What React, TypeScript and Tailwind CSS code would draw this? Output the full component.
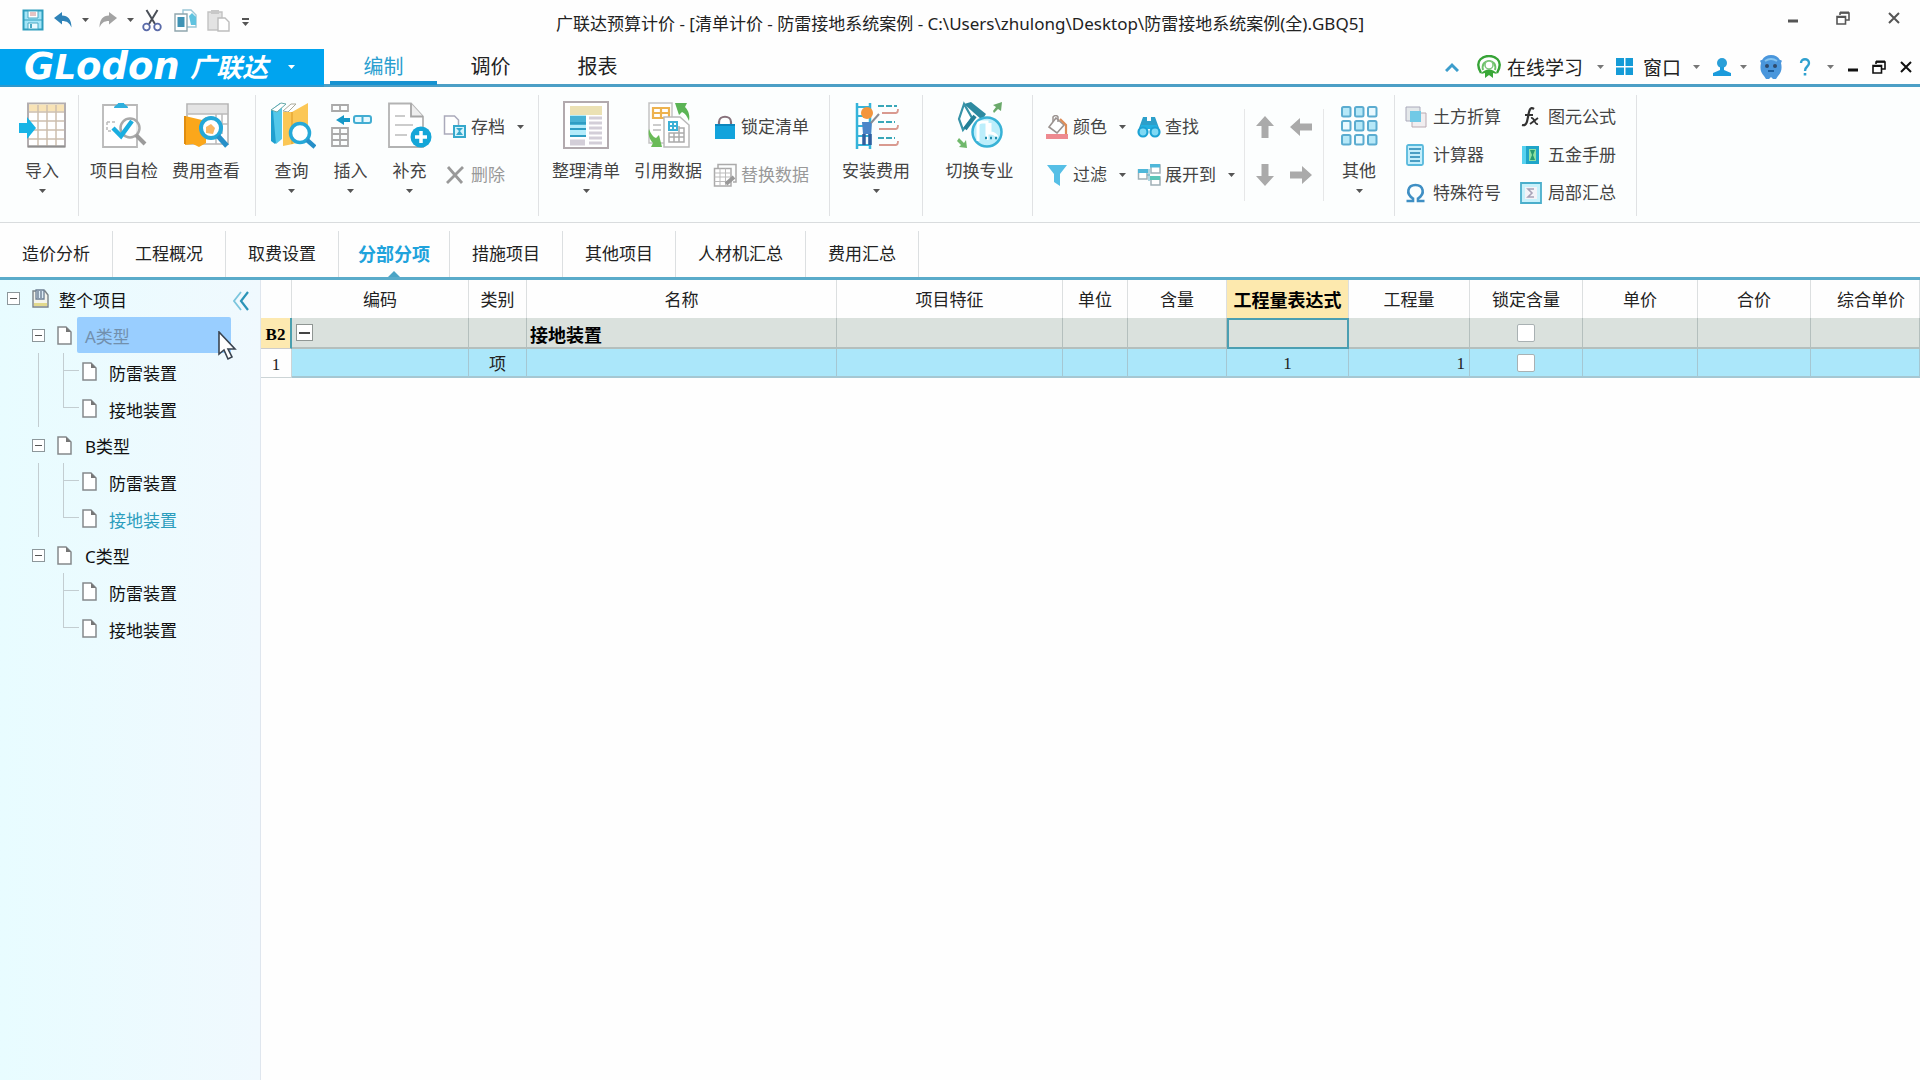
import type { ReactNode } from "react";

/* ---------- small shared pieces ---------- */

function Caret({ className = "text-[#555]" }: { className?: string }) {
  return (
    <svg viewBox="0 0 7 4" className={`h-1 w-[7px] shrink-0 ${className}`} aria-hidden="true">
      <path d="M0 0h7L3.500 4z" fill="currentColor" />
    </svg>
  );
}

function Svg({ s, vb, children }: { s: string; vb: string; children: ReactNode }) {
  return (
    <svg viewBox={vb} className={`shrink-0 ${s}`} fill="none" aria-hidden="true">
      {children}
    </svg>
  );
}

const small = "size-6";
const large = "size-12";

/* ---------- quick access icons ---------- */

const SaveIcon = () => (
  <Svg s="size-[22px]" vb="0 0 22 22">
    <path d="M1.500 1.500h19v19h-19z" stroke="#2e9dbd" strokeWidth="2" fill="#a5e6f8" />
    <path d="M6 2h10v7H6z" fill="#fff" stroke="#4aa9c4" />
    <path d="M8 4h6M8 6h6" stroke="#c88" />
    <path d="M2 11h18" stroke="#2e9dbd" />
    <path d="M6 14h10v6H6z" fill="#eafaff" stroke="#4aa9c4" />
    <path d="M9 15v4" stroke="#4aa9c4" strokeWidth="2" />
  </Svg>
);

const UndoIcon = ({ color }: { color: string }) => (
  <Svg s="h-4 w-[18px]" vb="0 0 18 16">
    <path d="M0 6 8 0v3.500c6 0 9.500 4 9.500 12C15.500 11 13 9 8 9v3.500z" fill={color} />
  </Svg>
);

const RedoIcon = ({ color }: { color: string }) => (
  <Svg s="h-4 w-[18px]" vb="0 0 18 16">
    <path d="M18 6 10 0v3.500c-6 0-9.500 4-9.500 12C2.500 11 5 9 10 9v3.500z" fill={color} />
  </Svg>
);

const CutIcon = () => (
  <Svg s="h-[23px] w-5" vb="0 0 20 23">
    <path d="M4.500 1 13 15M15.500 1 7 15" stroke="#4a4f58" strokeWidth="2" />
    <circle cx="4.500" cy="18" r="3.300" stroke="#5a6aa8" strokeWidth="1.800" />
    <circle cx="15.500" cy="18" r="3.300" stroke="#5a6aa8" strokeWidth="1.800" />
  </Svg>
);

const CopyIcon = () => (
  <Svg s="size-[23px]" vb="0 0 23 23">
    <path d="M9 1h8l5 5v12H9z" fill="#fff" stroke="#9ac6d6" strokeWidth="1.400" />
    <path d="M15 7l3-3 4 4v8h-5z" fill="#5fc3e0" />
    <path d="M1 5h12v17H1z" fill="#fff" stroke="#8fa5ad" strokeWidth="1.400" />
    <path d="M3.500 8h7v10h-7z" fill="#3f93b5" />
  </Svg>
);

const PasteIcon = () => (
  <Svg s="size-[23px]" vb="0 0 23 23">
    <path d="M1 3h14v18H1z" fill="#e3e3e3" stroke="#c2c2c2" strokeWidth="1.400" />
    <path d="M4 1h8v4H4z" fill="#c8c8c8" />
    <path d="M11 9h7l4 4v9H11z" fill="#fff" stroke="#bdbdbd" strokeWidth="1.400" />
  </Svg>
);

const RestoreIcon = ({ color }: { color: string }) => (
  <Svg s="size-[14px]" vb="0 0 14 14">
    <path d="M4 4V2h9v7h-3" stroke={color} strokeWidth="1.600" />
    <path d="M4 1.500h9" stroke={color} strokeWidth="2" />
    <path d="M1 5.500h8.500V13H1z" stroke={color} strokeWidth="1.600" />
    <path d="M1 6h8" stroke={color} strokeWidth="2" />
  </Svg>
);

const CloseIcon = ({ color }: { color: string }) => (
  <Svg s="size-3" vb="0 0 12 12">
    <path d="m1 1 10 10M11 1 1 11" stroke={color} strokeWidth="2" />
  </Svg>
);

const MinIcon = ({ color }: { color: string }) => (
  <Svg s="h-3 w-[10px]" vb="0 0 10 12">
    <path d="M0 9h10" stroke={color} strokeWidth="3" />
  </Svg>
);

/* ---------- ribbon icons, large ---------- */

const ImportIcon = () => (
  <Svg s={large} vb="0 0 48 48">
    <path d="M10 2.500h37v43H10z" fill="#fff" stroke="#b3aeb0" strokeWidth="2" />
    <path d="M11 3.500h35v7H11z" fill="#f8e3b6" />
    <path d="M11 11h35M11 20h35M11 29h35M11 38h35M20 4v41M29 4v41M38 4v41" stroke="#cdbfae" strokeWidth="1.500" />
    <path d="M10 45.500h37" stroke="#8f8f8f" strokeWidth="2" />
    <path d="M1 22h8v-6l9 11-9 11v-6H1z" fill="#17b4e6" />
  </Svg>
);

const CheckIcon = () => (
  <Svg s={large} vb="0 0 48 48">
    <path d="M3 4h34v42H3z" fill="#fff" stroke="#b9b9b9" strokeWidth="1.800" />
    <path d="M14 7c0-3 4-3 4-5h6c0 2 4 2 4 5z" fill="#2fb0de" />
    <path d="M7 21h9M7 21v9h4" stroke="#bbb" strokeDasharray="3 2" strokeWidth="1.500" />
    <circle cx="30" cy="27" r="9.500" fill="#fff" fillOpacity=".7" stroke="#a9a9a9" strokeWidth="2.500" />
    <path d="m36 34 9 9" stroke="#9b9b9b" strokeWidth="4" />
    <path d="m13 27 8 8 11-15" stroke="#1aaee0" strokeWidth="4.500" />
  </Svg>
);

const FeeViewIcon = () => (
  <Svg s={large} vb="0 0 48 48">
    <path d="M5 3h41v40H5z" fill="#fff" stroke="#b5b5b5" strokeWidth="1.600" />
    <path d="M6 4h39v9H6z" fill="#e4e4e4" />
    <path d="M6 13h40M16 23h30M34 13v30M40 13v20" stroke="#bbb" strokeWidth="1.500" />
    <path d="M3 15l17 4 4-3v26l-7 4-6-3-8 1z" fill="#fba71b" />
    <path d="M3 15v28" stroke="#e08d10" strokeWidth="2" />
    <circle cx="29" cy="27" r="10" fill="#fff" stroke="#26a8d8" strokeWidth="4" />
    <path d="M24 26l5-3 4 4-2 6-7-1z" fill="#f8b766" />
    <path d="m36 35 9 10" stroke="#268fc8" strokeWidth="5" />
  </Svg>
);

const QueryIcon = () => (
  <Svg s={large} vb="0 0 48 48">
    <path d="M3 9 12 2v36l-5 5-4-3z" fill="#1f9fcf" />
    <path d="M5 10 14 4v34l-6 5z" fill="#53c8ea" />
    <path d="m3 9 10-7 5 1-9 8z" fill="#fff" stroke="#6aa" />
    <path d="m15 10 8-7h5l-8 8z" fill="#fff" stroke="#aa9" />
    <path d="M15 11h9l16-9v36l-15 5-10 2z" fill="#fbc756" />
    <path d="M24 11v32" stroke="#e7a835" strokeWidth="1.500" />
    <circle cx="32" cy="32" r="9.500" fill="#fff" stroke="#26a8d8" strokeWidth="3.500" />
    <path d="m39 39 8 7" stroke="#268fc8" strokeWidth="4.500" />
  </Svg>
);

const InsertIcon = () => (
  <Svg s={large} vb="0 0 48 48">
    <path d="M5 4h16v6H5zM13 4v6M5 27h16v18H5zM13 27v18M5 33h16M5 39h16" stroke="#aaa" strokeWidth="1.800" />
    <path d="m9 19 8-5v3h6v4h-6v3z" fill="#1899c8" />
    <rect x="27" y="15" width="17" height="7" rx="2" stroke="#42add2" strokeWidth="2" fill="#e6f9ff" />
    <path d="M35.500 15v7" stroke="#42add2" strokeWidth="2" />
  </Svg>
);

const AddDocIcon = () => (
  <Svg s={large} vb="0 0 48 48">
    <path d="M3 2.500h22l12 13V46H3z" fill="#fff" stroke="#b3b3b3" strokeWidth="1.800" />
    <path d="M25 2.500v13h12" fill="#eee" stroke="#a5a5a5" strokeWidth="1.800" />
    <path d="M9 15h10M9 24h18M9 34h12" stroke="#ccc" strokeWidth="1.800" />
    <circle cx="35" cy="36" r="10.500" fill="#14a6d8" />
    <path d="M35 30v12M29 36h12" stroke="#fff" strokeWidth="3.500" />
  </Svg>
);

const TidyIcon = () => (
  <Svg s={large} vb="0 0 48 48">
    <path d="M2 1h44v46H2z" fill="#fff" stroke="#b2aaae" strokeWidth="2" />
    <path d="M8 5h32v9H8z" fill="#ebe1b4" />
    <path d="M8 14h16v22H8z" fill="#b4ecfb" />
    <path d="M8 15h16v9H8z" fill="#48b2d4" />
    <path d="M8 22h16M8 28h16M8 35h16" stroke="#2f9dc3" strokeWidth="2" />
    <path d="M27 17h13M27 22h13M27 27h13M27 32h13M27 37h13M27 42h13M8 40h15M8 43h15" stroke="#d3ced8" strokeWidth="3" />
  </Svg>
);

const ReuseIcon = () => (
  <Svg s={large} vb="0 0 48 48">
    <path d="M5 2h23v40H5z" fill="#fff" stroke="#c3c3c3" strokeWidth="1.500" />
    <path d="M9 7h16v10H9zM17 7v10M9 12h16" stroke="#edb24e" strokeWidth="2.200" />
    <path d="M9 24h8M9 29h8" stroke="#ccc" strokeWidth="2" />
    <path d="M20 16h16l9 8v22H20z" fill="#fff" stroke="#b9b9b9" strokeWidth="1.500" />
    <path d="M25 21h8v8h-8zM29 21v8M25 25h8" stroke="#3bb0d6" strokeWidth="2" />
    <path d="M25 32h15v9H25zM30 32v9M35 25v16M25 36h15M35 27h5v5" stroke="#aaa" strokeWidth="1.500" />
    <path d="M31 2h12l-2 4c4 4 5 9 4 14-2-5-4-8-7-9l-3 3z" fill="#5bb455" />
    <path d="M18 46H7l2-4c-4-4-5-9-4-14 2 5 4 8 7 9l3-3z" fill="#6abb58" />
  </Svg>
);

const InstallFeeIcon = () => (
  <Svg s={large} vb="0 0 48 48">
    <path d="M5 2v46M18 2v46" stroke="#35b4da" strokeWidth="2.500" />
    <path d="M5 6h13M5 15h13M5 25h13M5 35h13M5 44h13" stroke="#35b4da" strokeWidth="2" />
    <circle cx="15" cy="12" r="6" fill="#f3953c" />
    <path d="M10 21h10l-1 12h-8z" fill="#4b85c8" />
    <path d="m19 22 8-9" stroke="#8a8d95" strokeWidth="2" />
    <path d="M12 33v11M18 33v11" stroke="#315f9f" strokeWidth="3.500" />
    <path d="M26 5h19M26 21h17M26 37h17" stroke="#39a7b8" strokeWidth="2.200" strokeDasharray="6 2" />
    <path d="M30 12h14q2 0 2-4M27 28h17q2 0 2-4M27 44h17q2 0 2-4" stroke="#d99a90" strokeWidth="1.800" />
  </Svg>
);

const SwitchIcon = () => (
  <Svg s={large} vb="0 0 48 48">
    <path d="M8 3 15 1l15 12-4 6z" fill="#2d8aa0" />
    <path d="M8 3 3 18l4 11 9-12z" fill="#fff" stroke="#3793a8" strokeWidth="2.200" />
    <path d="m9 28 10-13" stroke="#247f96" strokeWidth="4" />
    <circle cx="31" cy="31" r="14.500" fill="#bdeefb" stroke="#38b2d6" strokeWidth="2.500" />
    <path d="M22 40V24q0-3 4-3h5v18M34 22v10q5 0 7 4" stroke="#fff" strokeWidth="3" />
    <path d="M29 37h2M34 37h2M39 37h2" stroke="#238eae" strokeWidth="2.500" />
    <path d="m37 4 9-3-1 9-3-2-4 4-1-2 3-4z" fill="#6aa96a" />
    <path d="m3 37 5 5 2-3 1 8-8-1 2-2-4-4z" fill="#6fb86b" />
  </Svg>
);

const OtherIcon = () => (
  <Svg s={large} vb="0 0 48 48">
    {[6, 20, 34].map((y) =>
      [7, 20, 33].map((x) => (
        <rect key={`${x}-${y}`} x={x} y={y} width="8.500" height="9.500" rx="1.500" fill={(x + y) % 3 === 0 ? "#e9f9ff" : "#b6e8f8"} stroke="#5bacd0" strokeWidth="2" />
      )),
    )}
  </Svg>
);

/* ---------- ribbon icons, small ---------- */

const ArchiveIcon = () => (
  <Svg s={small} vb="0 0 24 24">
    <path d="M1.500 1h10l4 4v14h-14z" fill="#fff" stroke="#aab" strokeWidth="1.500" />
    <path d="M11 11h11v11H11z" fill="#d6f4fc" stroke="#35a8cc" strokeWidth="2" />
    <path d="M13 13h7l-3 3 3 4h-7l3-4z" fill="#35a8cc" />
  </Svg>
);

const DeleteIcon = () => (
  <Svg s={small} vb="0 0 24 24">
    <path d="M5 4 19 20M20 4 4 20" stroke="#999" strokeWidth="2.800" />
  </Svg>
);

const LockIcon = () => (
  <Svg s={small} vb="0 0 24 24">
    <path d="M6 11V7c0-7 12-7 12 0v4" stroke="#86707a" strokeWidth="2.200" />
    <path d="M2 9h20v15H2z" fill="#12a3dc" />
    <path d="M2 10h20" stroke="#0b86bd" strokeWidth="2" />
  </Svg>
);

const ReplaceIcon = () => (
  <Svg s={small} vb="0 0 24 24">
    <path d="M5 5V1.500h18V19h-3" stroke="#aaa" strokeWidth="1.500" />
    <path d="M1.500 5.500H18V23H1.500z" fill="#fff" stroke="#aaa" strokeWidth="1.500" />
    <path d="M1.500 10H18M1.500 14H18M1.500 18.500H18M7 5.500V23M12.500 5.500V23" stroke="#bbb" />
    <path d="m13 21 8-7" stroke="#999" strokeWidth="4" />
  </Svg>
);

const ColorIcon = () => (
  <Svg s={small} vb="0 0 24 24">
    <path d="m11 3 8 7-7 8-8-6z" fill="#fff" stroke="#9b9390" strokeWidth="1.600" />
    <path d="M8 7V2q3-3 5 0v5" stroke="#9b9390" strokeWidth="1.500" />
    <path d="m15 4 6 6v9" stroke="#dd8c57" strokeWidth="2.200" />
    <path d="M1 19h22v5H1z" fill="#ee8a90" />
  </Svg>
);

const FilterIcon = () => (
  <Svg s={small} vb="0 0 24 24">
    <path d="M2 2h20l-7 9v12l-6-4v-8z" fill="#56bfe6" />
  </Svg>
);

const FindIcon = () => (
  <Svg s={small} vb="0 0 24 24">
    <path d="M6 2h4v4h4V2h4l4 11H2z" fill="#2c9fca" />
    <path d="M4 10h16v4H4z" fill="#23b0e0" />
    <circle cx="6" cy="17" r="4.500" fill="#7fd9f4" stroke="#1ba2d4" strokeWidth="2.200" />
    <circle cx="18" cy="17" r="4.500" fill="#7fd9f4" stroke="#1ba2d4" strokeWidth="2.200" />
  </Svg>
);

const ExpandIcon = () => (
  <Svg s={small} vb="0 0 24 24">
    <path d="M1.500 7H10v9H1.500zM14 2h9v8h-9zM14 14h9v8h-9z" fill="#fff" stroke="#9fb0b6" strokeWidth="1.500" />
    <path d="M1 6h10v4H1zM13 1h10v3.500H13z" fill="#4fb7d9" />
    <path d="M13 13h10v4H13z" fill="#5cc5b8" />
    <path d="M10 12h3M12 6v12" stroke="#62aec5" />
  </Svg>
);

const ArrowIcon = ({ turn }: { turn: string }) => (
  <Svg s={`size-6 ${turn}`} vb="0 0 24 24">
    <path d="M12 1 21 11h-5.500v12h-7V11H3z" fill="#aaa" />
  </Svg>
);

const EarthIcon = () => (
  <Svg s="size-[22px]" vb="0 0 22 22">
    <path d="M1 1h14v14H1z" fill="#e4e8ea" stroke="#aab" />
    <path d="M7 7h14v14H7z" fill="#f1eef0" stroke="#b9aab2" />
    <path d="M5 5h11v11H5z" fill="#71c9e6" />
  </Svg>
);

const CalcIcon = () => (
  <Svg s="size-[22px]" vb="0 0 22 22">
    <rect x="2" y="1" width="16" height="20" rx="1.500" fill="#c5eefb" stroke="#58b9dc" strokeWidth="1.800" />
    <path d="M4 5h12M5 9h10M5 13h10M5 17h10" stroke="#4a9ec4" strokeWidth="2" />
  </Svg>
);

const OmegaIcon = () => (
  <Svg s="size-[22px]" vb="0 0 22 22">
    <path d="M1.500 19H8v-2.500C.5 12 2.500 3 10.500 3s10 9 2.500 13.500V19h6.500" stroke="#3f8fc4" strokeWidth="2.600" />
  </Svg>
);

const FxIcon = () => (
  <Svg s="size-[22px]" vb="0 0 22 22">
    <path d="M14 3c-4-3-5 2-6 8s-2 9-6 8M5 9h8" stroke="#333" strokeWidth="2.200" />
    <path d="M11 12c4-1 3 7 7 6M18 12l-8 6" stroke="#333" strokeWidth="1.800" />
  </Svg>
);

const HandbookIcon = () => (
  <Svg s="size-[22px]" vb="0 0 22 22">
    <path d="M2 2h17v18H2z" fill="#1fa5c9" />
    <path d="M2 2h4v18H2z" fill="#56d1ef" />
    <path d="M9 5h7v12H9z" fill="#8fe0a2" />
    <path d="M10 6h5l-2 5 2 5h-5l2-5z" fill="#259a70" />
  </Svg>
);

const SumIcon = () => (
  <Svg s="size-[22px]" vb="0 0 22 22">
    <path d="M1 1h20v20H1z" fill="#c9f1fb" stroke="#4aaecb" strokeWidth="1.800" />
    <path d="M5 5h12v12H5z" fill="#f3f3f7" />
    <path d="M14 7H8l4 4-4 4h6" stroke="#a8a3b8" strokeWidth="1.600" />
  </Svg>
);

/* ---------- ribbon building blocks ---------- */

function BigButton({ icon, label, width, caret }: { icon: ReactNode; label: string; width: string; caret?: boolean }) {
  return (
    <button type="button" className={`flex shrink-0 flex-col items-center ${width}`}>
      {icon}
      <span className="mt-2.5 leading-6 whitespace-nowrap">{label}</span>
      {caret && <Caret className="mt-1.5 text-[#555]" />}
    </button>
  );
}

function SmallButton({ icon, label, caret, muted, gap = "gap-1" }: { icon: ReactNode; label: string; caret?: boolean; muted?: boolean; gap?: string }) {
  return (
    <button type="button" className={`flex h-6 items-center whitespace-nowrap ${gap} ${muted ? "text-[#999]" : ""}`}>
      {icon}
      <span>{label}</span>
      {caret && <Caret className="ml-2 text-[#555]" />}
    </button>
  );
}

const group = "flex shrink-0 items-start border-r border-[#e0e2e4] pt-1.5";
const stack = "flex flex-col gap-6 pt-[14px]";

function Ribbon() {
  return (
    <div className="flex h-[136px] overflow-hidden border-b border-[#d9dcde] bg-[#fcfefe] pt-2 pb-1.5 text-[17px] leading-6 text-[#444]">
      <div className={`${group} pl-1.5`}>
        <BigButton icon={<ImportIcon />} label="导入" width="w-[72px]" caret />
      </div>
      <div className={`${group} pr-2 pl-1`}>
        <BigButton icon={<CheckIcon />} label="项目自检" width="w-[82px]" />
        <BigButton icon={<FeeViewIcon />} label="费用查看" width="w-[82px]" />
      </div>
      <div className={`${group} pr-3.5 pl-1.5`}>
        <BigButton icon={<QueryIcon />} label="查询" width="w-[59px]" caret />
        <BigButton icon={<InsertIcon />} label="插入" width="w-[59px]" caret />
        <BigButton icon={<AddDocIcon />} label="补充" width="w-[59px]" caret />
        <div className={`${stack} pl-1`}>
          <SmallButton icon={<ArchiveIcon />} label="存档" caret />
          <SmallButton icon={<DeleteIcon />} label="删除" muted />
        </div>
      </div>
      <div className={`${group} pr-5 pl-1.5`}>
        <BigButton icon={<TidyIcon />} label="整理清单" width="w-[82px]" caret />
        <BigButton icon={<ReuseIcon />} label="引用数据" width="w-[82px]" />
        <div className={`${stack} pl-1`}>
          <SmallButton icon={<LockIcon />} label="锁定清单" />
          <SmallButton icon={<ReplaceIcon />} label="替换数据" muted />
        </div>
      </div>
      <div className={`${group}`}>
        <BigButton icon={<InstallFeeIcon />} label="安装费用" width="w-[92px]" caret />
      </div>
      <div className={`${group} pl-1`}>
        <BigButton icon={<SwitchIcon />} label="切换专业" width="w-[105px]" />
      </div>
      <div className={`${group} pl-3`}>
        <div className={`${stack} w-[92px]`}>
          <SmallButton icon={<ColorIcon />} label="颜色" caret />
          <SmallButton icon={<FilterIcon />} label="过滤" caret />
        </div>
        <div className={`${stack} w-[107px]`}>
          <SmallButton icon={<FindIcon />} label="查找" />
          <SmallButton icon={<ExpandIcon />} label="展开到" caret />
        </div>
        <div className="mt-2 grid h-[92px] grid-cols-2 content-start gap-x-3 gap-y-6 border-x border-[#e6e7e8] px-2 pt-1.5 pr-2.5">
          <button type="button" aria-label="上移"><ArrowIcon turn="" /></button>
          <button type="button" aria-label="左移"><ArrowIcon turn="-rotate-90" /></button>
          <button type="button" aria-label="下移"><ArrowIcon turn="rotate-180" /></button>
          <button type="button" aria-label="右移"><ArrowIcon turn="rotate-90" /></button>
        </div>
        <BigButton icon={<OtherIcon />} label="其他" width="w-[70px]" caret />
      </div>
      <div className="flex shrink-0 border-r border-[#e0e2e4] pr-5 pl-2.5">
        <div className="grid grid-cols-[115px_auto] content-start gap-y-3.5 pt-2.5">
          <SmallButton gap="gap-1.5" icon={<EarthIcon />} label="土方折算" />
          <SmallButton gap="gap-1.5" icon={<FxIcon />} label="图元公式" />
          <SmallButton gap="gap-1.5" icon={<CalcIcon />} label="计算器" />
          <SmallButton gap="gap-1.5" icon={<HandbookIcon />} label="五金手册" />
          <SmallButton gap="gap-1.5" icon={<OmegaIcon />} label="特殊符号" />
          <SmallButton gap="gap-1.5" icon={<SumIcon />} label="局部汇总" />
        </div>
      </div>
    </div>
  );
}

/* ---------- title bar and menu ---------- */

function TitleBar() {
  return (
    <header className="grid h-[49px] grid-cols-[1fr_auto_1fr] items-start bg-[#fefefe]">
      <div className="flex h-10 items-center pl-[22px]">
        <button type="button" aria-label="保存"><SaveIcon /></button>
        <button type="button" aria-label="撤销" className="ml-2.5"><UndoIcon color="#2f83b8" /></button>
        <button type="button" aria-label="撤销列表" className="ml-2.5"><Caret /></button>
        <button type="button" aria-label="恢复" className="ml-2.5"><RedoIcon color="#a3a3a3" /></button>
        <button type="button" aria-label="恢复列表" className="ml-2.5"><Caret /></button>
        <button type="button" aria-label="剪切" className="ml-2"><CutIcon /></button>
        <button type="button" aria-label="复制" className="ml-3"><CopyIcon /></button>
        <button type="button" aria-label="粘贴" className="ml-2.5"><PasteIcon /></button>
        <button type="button" aria-label="自定义" className="ml-3 flex flex-col items-center gap-0.5 pt-1">
          <span className="h-0.5 w-[7px] bg-[#555]" />
          <Caret />
        </button>
      </div>
      <h1 className="pt-3 text-[17px] leading-6 whitespace-nowrap text-[#222]">
        广联达预算计价 - [清单计价 - 防雷接地系统案例 - C:\Users\zhulong\Desktop\防雷接地系统案例(全).GBQ5]
      </h1>
      <div className="flex h-9 items-center justify-end gap-[38px] pr-5">
        <button type="button" aria-label="最小化"><MinIcon color="#555" /></button>
        <button type="button" aria-label="还原"><RestoreIcon color="#555" /></button>
        <button type="button" aria-label="关闭"><CloseIcon color="#555" /></button>
      </div>
    </header>
  );
}

function MenuBar() {
  return (
    <div className="flex h-[38px] items-stretch border-b-[3px] border-[#4c9fc6] bg-[#fefefe]">
      <button type="button" className="-mb-[3px] flex w-[324px] items-center border-b-2 border-[#2f98cc] bg-[#00a4ef] pl-6 text-white">
        <span className="flex w-[166px] items-baseline font-['DejaVu_Sans'] text-[37px] leading-9 font-bold italic">
          G<span className="text-[34px]">L</span>odon
        </span>
        <span className="text-[26px] leading-9 font-bold italic">广联达</span>
        <Caret className="ml-5 text-white" />
      </button>
      <nav className="ml-1.5 flex text-[20px] leading-8">
        <a href="#edit" className="-mb-px w-[107px] border-b-4 border-[#1793d1] pt-0.5 text-center text-[#2b9fd0]">编制</a>
        <a href="#price" className="w-[107px] pt-0.5 text-center text-[#222]">调价</a>
        <a href="#report" className="w-[107px] pt-0.5 text-center text-[#222]">报表</a>
      </nav>
      <div className="ml-auto flex items-center pr-2">
        <button type="button" aria-label="折叠功能区">
          <Svg s="h-[10px] w-[14px]" vb="0 0 14 10"><path d="m1 9 6-6 6 6" stroke="#3c9dcc" strokeWidth="3" /></Svg>
        </button>
        <button type="button" className="ml-[18px] flex items-center gap-1.5 text-[19px] text-[#222]">
          <Svg s="size-6" vb="0 0 24 24">
            <path d="M4 18C-4 4 8 1 12 1s16 3 8 17" stroke="#36a336" strokeWidth="2.400" />
            <path d="M6 15c-3-12 15-12 12 0" stroke="#6cc268" strokeWidth="2" />
            <circle cx="12" cy="10" r="4" fill="#fff" stroke="#7cc47a" strokeWidth="1.500" />
            <path d="M4 19c3-6 13-6 16 0l-4-1v5l-4-3-4 3v-5z" fill="#3aa838" />
          </Svg>
          <span className="pt-0.5 leading-7">在线学习</span>
          <Caret className="ml-2 text-[#777]" />
        </button>
        <button type="button" className="ml-3 flex items-center text-[19px] text-[#222]">
          <Svg s="mr-2.5 size-[17px]" vb="0 0 17 17">
            <path d="M0 0h8v8H0zM9.500 0H17v8H9.500zM0 9.500h8V17H0zM9.500 9.500H17V17H9.500z" fill="#159bd7" />
          </Svg>
          <span className="pt-0.5 leading-7">窗口</span>
          <Caret className="ml-3 text-[#777]" />
        </button>
        <button type="button" aria-label="用户" className="ml-3 flex items-center gap-2">
          <Svg s="h-[18px] w-5" vb="0 0 20 18">
            <circle cx="10" cy="5" r="5" fill="#2a9fd8" />
            <path d="M8 9h4v3l7 3v3H1v-3l7-3z" fill="#1b9bdc" />
          </Svg>
          <Caret className="text-[#777]" />
        </button>
        <button type="button" aria-label="助手" className="ml-3">
          <Svg s="size-6" vb="0 0 24 24">
            <path d="M2 8Q0 5 3 5 6 0 12 0t9 5q3 0 1 3 2 8-3 13l-2 3h-3l-2-2-2 2H7l-2-3Q0 16 2 8z" fill="#4a96dc" />
            <path d="M6 6q6-4 12 0" stroke="#86c5f0" strokeWidth="2" />
            <circle cx="8" cy="11" r="2" fill="#2f4a6c" />
            <circle cx="16" cy="11" r="2" fill="#2f4a6c" />
            <path d="M9 16h6" stroke="#1f5f9e" strokeWidth="2" />
          </Svg>
        </button>
        <button type="button" aria-label="帮助" className="ml-4 flex items-center gap-4">
          <Svg s="h-[18px] w-3" vb="0 0 12 18">
            <path d="M2 5c0-5 8-5 8 0 0 4-4 3-4 8" stroke="#2fa0cf" strokeWidth="2.400" />
            <path d="M6 15v2.500" stroke="#2fa0cf" strokeWidth="2.600" />
          </Svg>
          <Caret className="text-[#777]" />
        </button>
        <div className="ml-3.5 flex items-center gap-3.5">
          <button type="button" aria-label="最小化文档"><MinIcon color="#111" /></button>
          <button type="button" aria-label="还原文档"><RestoreIcon color="#111" /></button>
          <button type="button" aria-label="关闭文档"><CloseIcon color="#111" /></button>
        </div>
      </div>
    </div>
  );
}

/* ---------- section tabs ---------- */

const sections = ["造价分析", "工程概况", "取费设置", "分部分项", "措施项目", "其他项目", "人材机汇总", "费用汇总"];

function SectionTabs() {
  return (
    <nav className="flex h-[57px] border-b-[3px] border-[#5aabca] bg-[#fefefe] pt-2 text-[17px]">
      {sections.map((name) => {
        const active = name === "分部分项";
        return (
          <a
            key={name}
            href={`#${name}`}
            aria-current={active ? "page" : undefined}
            className={`relative flex items-center justify-center border-r border-[#dcdfe1] whitespace-nowrap ${
              active ? "px-[19px] text-[18px] font-bold text-[#1fa3dc]" : "px-[22px] text-[#222]"
            }`}
          >
            {name}
            {active && (
              <svg viewBox="0 0 12 6" className="absolute bottom-0 left-1/2 h-1.5 w-3 -translate-x-1/2" aria-hidden="true">
                <path d="M0 6 6 0l6 6z" fill="#4ba4c6" />
              </svg>
            )}
          </a>
        );
      })}
    </nav>
  );
}

/* ---------- project tree ---------- */

function Expander({ className = "" }: { className?: string }) {
  return (
    <button type="button" aria-label="折叠节点" className={`flex size-[13px] shrink-0 items-center justify-center border border-[#8d979b] bg-white ${className}`}>
      <span className="h-px w-[7px] bg-[#555]" />
    </button>
  );
}

const PageIcon = () => (
  <Svg s="h-[19px] w-[15px]" vb="0 0 15 19">
    <path d="M1 1h8l5 5v12H1z" fill="#fff" stroke="#85898c" strokeWidth="1.500" />
    <path d="M9 1v5h5z" fill="#777" />
  </Svg>
);

const ProjectIcon = () => (
  <Svg s="h-[19px] w-[17px]" vb="0 0 17 19">
    <path d="M1 2h12l3 4v12H1z" fill="#f4f4ec" stroke="#7b8388" strokeWidth="1.400" />
    <path d="M4 1h8v9H4z" fill="#dcebf5" stroke="#6d7f93" strokeWidth="1.300" />
    <path d="M6 2v7M9 2v7" stroke="#6d7f93" strokeWidth="1.400" />
    <path d="M2 14h13v3H2z" fill="#e2d98c" />
  </Svg>
);

const projects = [
  { name: "A类型", hover: true },
  { name: "B类型", current: "接地装置" },
  { name: "C类型" },
];

function ProjectTree() {
  return (
    <aside className="relative w-[261px] shrink-0 border-r border-[#dfe6ee] bg-linear-to-r from-[#e8fcff] to-[#f0f9fe] text-[17px] text-[#111]">
      <div className="flex h-[37px] items-center pr-[11px] pl-[7px]">
        <Expander />
        <span className="mr-2.5 ml-3 flex"><ProjectIcon /></span>
        <span className="pt-1">整个项目</span>
        <button type="button" aria-label="收起导航" className="ml-auto pt-1">
          <Svg s="h-5 w-4" vb="0 0 16 20">
            <path d="m8 1-7 9 7 9" stroke="#7cc6de" strokeWidth="1.800" />
            <path d="m15 1-7 9 7 9" stroke="#2b94b8" strokeWidth="2.200" />
          </Svg>
        </button>
      </div>
      <ul>
        {projects.map((project, index) => (
          <li key={project.name}>
            <div className="flex h-9 items-center pl-8">
              <Expander />
              <span className="mr-[5px] ml-3 flex"><PageIcon /></span>
              <span
                className={`flex h-full w-[154px] items-center pt-1 pl-2 ${project.hover ? "rounded-xs bg-[#99ceff] text-[#7290ad]" : ""}`}
              >
                {project.name}
              </span>
            </div>
            <ul className={`ml-[38px] border-l pl-6 ${index < projects.length - 1 ? "border-[#c3cdd1]" : "border-transparent"}`}>
              {["防雷装置", "接地装置"].map((leaf, i) => (
                <li key={leaf} className="flex h-[37px] items-center">
                  <span className="flex h-full w-4 flex-col">
                    <span className="h-[18px] border-b border-l border-[#c3cdd1]" />
                    <span className={`grow ${i === 0 ? "border-l border-[#c3cdd1]" : ""}`} />
                  </span>
                  <span className="mr-3 ml-[3px] flex"><PageIcon /></span>
                  <span className={`pt-1 ${project.current === leaf ? "text-[#2b9dbd]" : ""}`}>{leaf}</span>
                </li>
              ))}
            </ul>
          </li>
        ))}
      </ul>
      <svg viewBox="0 0 20 30" className="absolute top-[51px] left-[217px] h-[30px] w-5" aria-hidden="true">
        <path d="M2 1v22l5-4 4 9 4-2-4-8h7z" fill="#fff" stroke="#3a4450" strokeWidth="1.600" />
      </svg>
    </aside>
  );
}

/* ---------- quantity table ---------- */

const columns = [
  { name: "", width: "w-[31px]" },
  { name: "编码", width: "w-[177px]" },
  { name: "类别", width: "w-[58px]" },
  { name: "名称", width: "w-[310px]" },
  { name: "项目特征", width: "w-[226px]" },
  { name: "单位", width: "w-[65px]" },
  { name: "含量", width: "w-[99px]" },
  { name: "工程量表达式", width: "w-[122px]" },
  { name: "工程量", width: "w-[121px]" },
  { name: "锁定含量", width: "w-[113px]" },
  { name: "单价", width: "w-[115px]" },
  { name: "合价", width: "w-[113px]" },
  { name: "综合单价", width: "" },
];

const groupCell = "border-r border-b-2 border-[#b4bfbd] p-0";
const itemCell = "border-r border-b-2 border-[#a5c7d2] p-0";

function LockBox({ label }: { label: string }) {
  return (
    <input
      type="checkbox"
      aria-label={label}
      className="mx-auto block size-[18px] appearance-none rounded-xs border border-[#a9b1b3] bg-white"
    />
  );
}

function QuantityTable() {
  return (
    <main className="min-w-0 grow overflow-hidden bg-[#fefefe]">
      <table className="w-full table-fixed border-separate border-spacing-0 text-[17px] leading-6 text-[#222]">
        <thead>
          <tr className="h-[38px]">
            {columns.map((column) => (
              <th
                key={column.name}
                scope="col"
                className={`border-r border-[#dcdfe0] p-0 pt-0.5 whitespace-nowrap ${column.width} ${
                  column.name === "工程量表达式" ? "bg-[#fde9ae] text-[18px] font-bold text-black" : "font-normal"
                } ${column.width === "" ? "pl-3" : ""}`}
              >
                {column.name}
              </th>
            ))}
          </tr>
        </thead>
        <tbody>
          <tr className="h-[31px] bg-[#dae1dd]">
            <th scope="row" className="border-r-2 border-b border-r-[#4a9fae] border-b-[#ccc] bg-[#fde9b0] p-0 pt-1 font-['Liberation_Serif'] text-[17px] font-bold text-black">
              B2
            </th>
            <td className={groupCell}>
              <button type="button" aria-label="折叠分部" className="ml-1 flex size-[17px] items-center justify-center border border-[#8f9693] bg-white">
                <span className="h-0.5 w-[11px] bg-[#444]" />
              </button>
            </td>
            <td className={groupCell} />
            <td className={`${groupCell} pt-1 pl-[3px] text-[18px] font-bold text-black`}>接地装置</td>
            <td className={groupCell} />
            <td className={groupCell} />
            <td className={groupCell} />
            <td className="p-0">
              <input aria-label="工程量表达式" className="block h-[31px] w-full border-2 border-[#4b9fb2] bg-transparent px-1 outline-none" />
            </td>
            <td className={groupCell} />
            <td className={groupCell}><LockBox label="锁定含量 B2" /></td>
            <td className={groupCell} />
            <td className={groupCell} />
            <td className={groupCell} />
          </tr>
          <tr className="h-[29px] bg-[#abe7fa]">
            <th scope="row" className="border-r border-b border-[#ccd4d6] bg-[#fefefe] p-0 pt-1 font-['Liberation_Serif'] font-normal">1</th>
            <td className={itemCell} />
            <td className={`${itemCell} pt-0.5 text-center`}>项</td>
            <td className={itemCell} />
            <td className={itemCell} />
            <td className={itemCell} />
            <td className={itemCell} />
            <td className={`${itemCell} pt-0.5 text-center font-['Liberation_Serif']`}>1</td>
            <td className={`${itemCell} pt-0.5 pr-1 text-right font-['Liberation_Serif']`}>1</td>
            <td className={itemCell}><LockBox label="锁定含量 1" /></td>
            <td className={itemCell} />
            <td className={itemCell} />
            <td className={itemCell} />
          </tr>
        </tbody>
      </table>
    </main>
  );
}

export default function App() {
  return (
    <div className="flex min-h-screen flex-col bg-[#fefefe] font-['Noto_Sans','Noto_Sans_CJK_SC',sans-serif]">
      <TitleBar />
      <MenuBar />
      <Ribbon />
      <SectionTabs />
      <div className="flex grow">
        <ProjectTree />
        <QuantityTable />
      </div>
    </div>
  );
}
